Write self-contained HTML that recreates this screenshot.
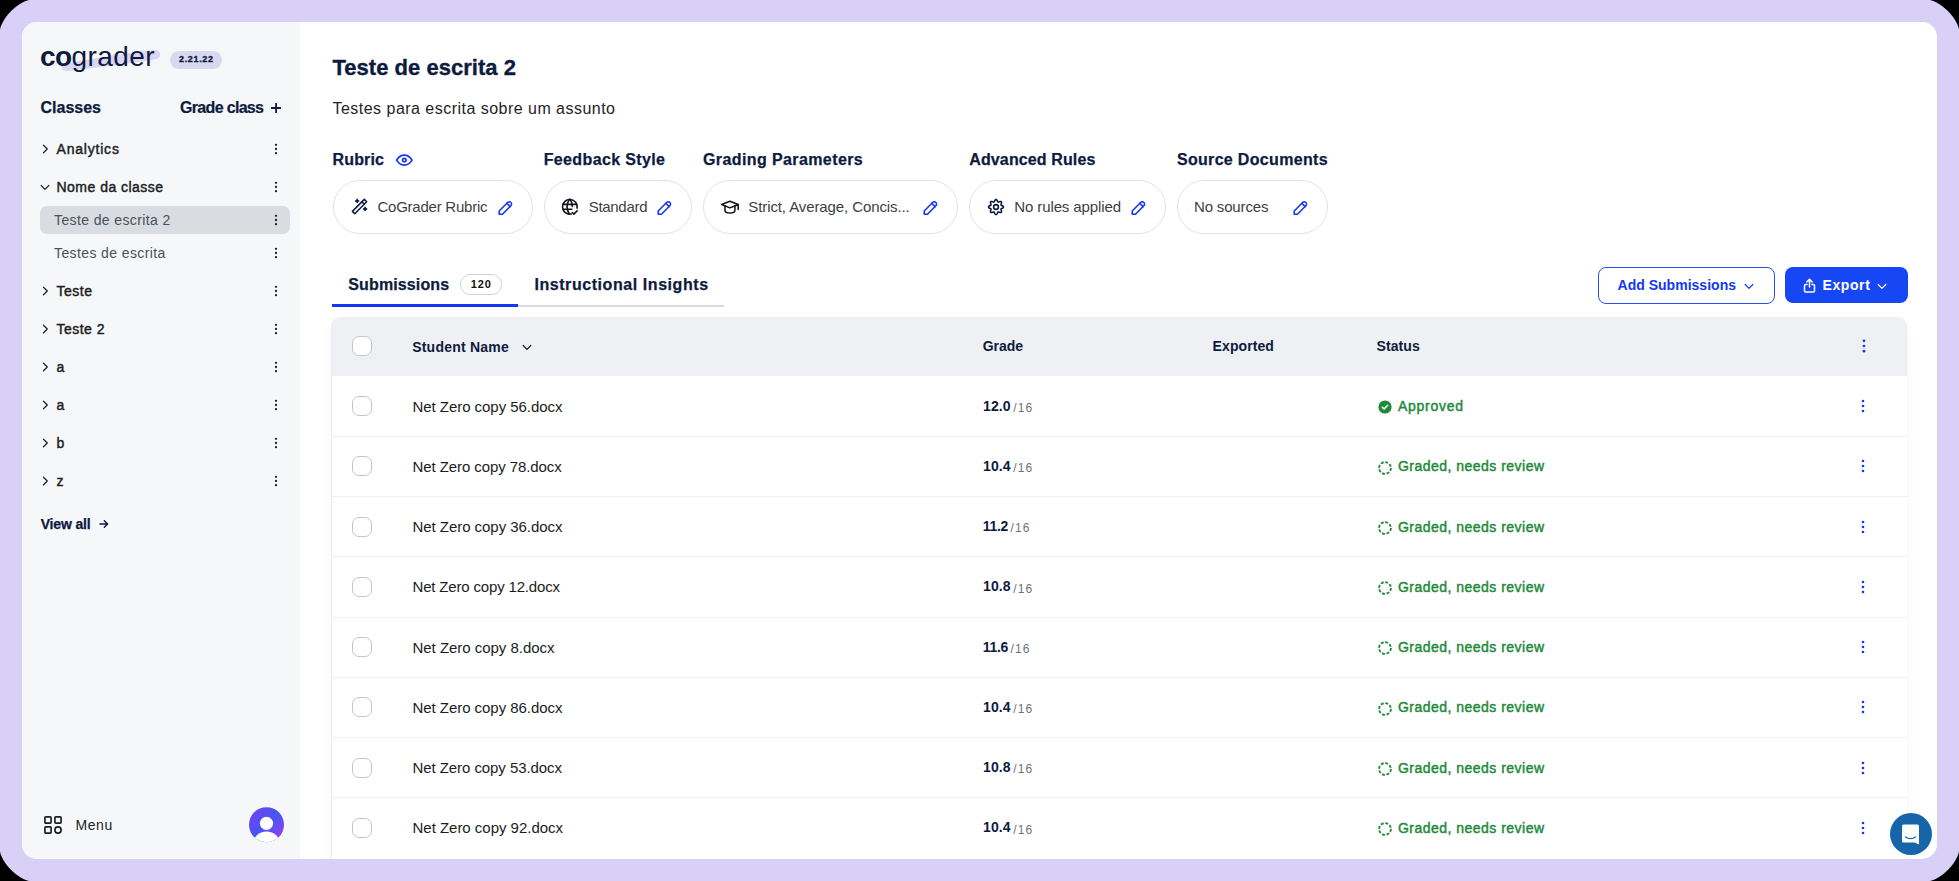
<!DOCTYPE html>
<html><head><meta charset="utf-8">
<style>
*{box-sizing:border-box;margin:0;padding:0}
html,body{width:1959px;height:881px;overflow:hidden;background:#000}
body{font-family:"Liberation Sans",sans-serif;position:relative}
.frame{position:absolute;left:0;top:0;width:1959px;height:881px;background:#d8d0f6;border-radius:30px}
.panel{position:absolute;left:22px;top:22px;width:1915px;height:837px;background:#fff;border-radius:15px;overflow:hidden}
.side{position:absolute;left:0;top:0;width:278px;height:837px;background:#f6f7f9}
.inner{position:absolute;left:-22px;top:-22px;width:1959px;height:881px}
.abs{position:absolute}
.t{position:absolute;white-space:nowrap}
.pill{border:1px solid #dfe2e8;border-radius:27px;background:#fff}
.tbl{background:#fff;border-radius:9px;box-shadow:-1px 0 0 #eceef1,0 5px 10px rgba(20,30,60,0.05)}
</style></head><body>
<svg style="position:absolute;left:0;top:0" width="1959" height="881" viewBox="0 0 1959 881"><path d="M0.00 30.00 L0.09 29.21 L0.34 28.01 L0.77 26.61 L1.36 25.05 L2.10 23.39 L3.01 21.66 L4.05 19.89 L5.24 18.09 L6.54 16.30 L7.97 14.52 L9.49 12.78 L11.10 11.10 L12.78 9.49 L14.52 7.97 L16.30 6.54 L18.09 5.24 L19.89 4.05 L21.66 3.01 L23.39 2.10 L25.05 1.36 L26.61 0.77 L28.01 0.34 L29.21 0.09 L30.00 0.00 L1929.00 0.00 L1929.79 0.09 L1930.99 0.34 L1932.39 0.77 L1933.95 1.36 L1935.61 2.10 L1937.34 3.01 L1939.11 4.05 L1940.91 5.24 L1942.70 6.54 L1944.48 7.97 L1946.22 9.49 L1947.90 11.10 L1949.51 12.78 L1951.03 14.52 L1952.46 16.30 L1953.76 18.09 L1954.95 19.89 L1955.99 21.66 L1956.90 23.39 L1957.64 25.05 L1958.23 26.61 L1958.66 28.01 L1958.91 29.21 L1959.00 30.00 L1959.00 851.00 L1958.91 851.79 L1958.66 852.99 L1958.23 854.39 L1957.64 855.95 L1956.90 857.61 L1955.99 859.34 L1954.95 861.11 L1953.76 862.91 L1952.46 864.70 L1951.03 866.48 L1949.51 868.22 L1947.90 869.90 L1946.22 871.51 L1944.48 873.03 L1942.70 874.46 L1940.91 875.76 L1939.11 876.95 L1937.34 877.99 L1935.61 878.90 L1933.95 879.64 L1932.39 880.23 L1930.99 880.66 L1929.79 880.91 L1929.00 881.00 L30.00 881.00 L29.21 880.91 L28.01 880.66 L26.61 880.23 L25.05 879.64 L23.39 878.90 L21.66 877.99 L19.89 876.95 L18.09 875.76 L16.30 874.46 L14.52 873.03 L12.78 871.51 L11.10 869.90 L9.49 868.22 L7.97 866.48 L6.54 864.70 L5.24 862.91 L4.05 861.11 L3.01 859.34 L2.10 857.61 L1.36 855.95 L0.77 854.39 L0.34 852.99 L0.09 851.79 L0.00 851.00Z" fill="#d8d0f6"/></svg>
<div class="panel">
  <div class="side"></div>
  <div class="inner">
<svg class="abs" style="left:58px;top:44px" width="106" height="32" viewBox="0 0 106 32"><path d="M6 20 C 30 15, 70 9, 97 6 C 103 5.5, 104 13, 99 15 C 75 19, 35 24, 9 27 C 3 27.5, 1 21, 6 20 Z" fill="#d9d6f4"/></svg><div class="t" style="left:40.00px;top:43.00px;font-size:28px;line-height:28px;color:#0d1b3e;"><b style="font-weight:bold;letter-spacing:-0.6px">co</b><span style="letter-spacing:0.45px">grader</span></div><div class="abs" style="left:170px;top:50.5px;width:52px;height:18px;border-radius:9px;background:#dad7f1"></div><div class="t" style="left:179.00px;top:54.98px;font-size:9px;line-height:9px;color:#0d1b3e;font-weight:bold;letter-spacing:0.662px;-webkit-text-stroke:0.3px #0d1b3e;">2.21.22</div><div class="t" style="left:40.50px;top:99.76px;font-size:16px;line-height:16px;color:#0d1b3e;font-weight:bold;-webkit-text-stroke:0.25px #0d1b3e;">Classes</div><div class="t" style="left:180.00px;top:99.76px;font-size:16px;line-height:16px;color:#0d1b3e;font-weight:bold;letter-spacing:-0.673px;-webkit-text-stroke:0.2px #0d1b3e;">Grade class</div><svg class="abs" style="left:270.8px;top:103px" width="10.2" height="10" viewBox="0 0 10.2 10"><path d="M5.1 0V10M0 5H10.2" stroke="#0d1b3e" stroke-width="1.8"/></svg><div class="abs" style="left:40px;top:206.3px;width:250px;height:27.3px;border-radius:7px;background:#d9dde2"></div><div class="t" style="left:56.50px;top:141.55px;font-size:14px;line-height:14px;color:#1c1f24;letter-spacing:0.797px;-webkit-text-stroke:0.45px #1c1f24;">Analytics</div><svg class="abs" style="left:41px;top:143.6px" width="8" height="10" viewBox="0 0 8 10"><path d="M2.5 1.2L6.3 5L2.5 8.8" fill="none" stroke="#1f2328" stroke-width="1.25" stroke-linecap="round" stroke-linejoin="round"/></svg><svg class="abs" style="left:273px;top:141.6px" width="6" height="14" viewBox="0 0 6 14"><circle cx="3" cy="2.8" r="1.15" fill="#1f2328"/><circle cx="3" cy="7" r="1.15" fill="#1f2328"/><circle cx="3" cy="11.2" r="1.15" fill="#1f2328"/></svg><div class="t" style="left:56.50px;top:179.65px;font-size:14px;line-height:14px;color:#1c1f24;letter-spacing:0.479px;-webkit-text-stroke:0.45px #1c1f24;">Nome da classe</div><svg class="abs" style="left:40px;top:182.7px" width="10" height="8" viewBox="0 0 10 8"><path d="M1.2 2.5L5 6.3L8.8 2.5" fill="none" stroke="#1f2328" stroke-width="1.2" stroke-linecap="round" stroke-linejoin="round"/></svg><svg class="abs" style="left:273px;top:179.7px" width="6" height="14" viewBox="0 0 6 14"><circle cx="3" cy="2.8" r="1.15" fill="#1f2328"/><circle cx="3" cy="7" r="1.15" fill="#1f2328"/><circle cx="3" cy="11.2" r="1.15" fill="#1f2328"/></svg><div class="t" style="left:56.50px;top:321.85px;font-size:14px;line-height:14px;color:#1c1f24;letter-spacing:0.477px;-webkit-text-stroke:0.45px #1c1f24;">Teste 2</div><svg class="abs" style="left:41px;top:323.9px" width="8" height="10" viewBox="0 0 8 10"><path d="M2.5 1.2L6.3 5L2.5 8.8" fill="none" stroke="#1f2328" stroke-width="1.25" stroke-linecap="round" stroke-linejoin="round"/></svg><svg class="abs" style="left:273px;top:321.9px" width="6" height="14" viewBox="0 0 6 14"><circle cx="3" cy="2.8" r="1.15" fill="#1f2328"/><circle cx="3" cy="7" r="1.15" fill="#1f2328"/><circle cx="3" cy="11.2" r="1.15" fill="#1f2328"/></svg><div class="t" style="left:56.50px;top:359.65px;font-size:14px;line-height:14px;color:#1c1f24;-webkit-text-stroke:0.45px #1c1f24;">a</div><svg class="abs" style="left:41px;top:361.7px" width="8" height="10" viewBox="0 0 8 10"><path d="M2.5 1.2L6.3 5L2.5 8.8" fill="none" stroke="#1f2328" stroke-width="1.25" stroke-linecap="round" stroke-linejoin="round"/></svg><svg class="abs" style="left:273px;top:359.7px" width="6" height="14" viewBox="0 0 6 14"><circle cx="3" cy="2.8" r="1.15" fill="#1f2328"/><circle cx="3" cy="7" r="1.15" fill="#1f2328"/><circle cx="3" cy="11.2" r="1.15" fill="#1f2328"/></svg><div class="t" style="left:56.50px;top:397.65px;font-size:14px;line-height:14px;color:#1c1f24;-webkit-text-stroke:0.45px #1c1f24;">a</div><svg class="abs" style="left:41px;top:399.7px" width="8" height="10" viewBox="0 0 8 10"><path d="M2.5 1.2L6.3 5L2.5 8.8" fill="none" stroke="#1f2328" stroke-width="1.25" stroke-linecap="round" stroke-linejoin="round"/></svg><svg class="abs" style="left:273px;top:397.7px" width="6" height="14" viewBox="0 0 6 14"><circle cx="3" cy="2.8" r="1.15" fill="#1f2328"/><circle cx="3" cy="7" r="1.15" fill="#1f2328"/><circle cx="3" cy="11.2" r="1.15" fill="#1f2328"/></svg><div class="t" style="left:56.50px;top:435.65px;font-size:14px;line-height:14px;color:#1c1f24;-webkit-text-stroke:0.45px #1c1f24;">b</div><svg class="abs" style="left:41px;top:437.7px" width="8" height="10" viewBox="0 0 8 10"><path d="M2.5 1.2L6.3 5L2.5 8.8" fill="none" stroke="#1f2328" stroke-width="1.25" stroke-linecap="round" stroke-linejoin="round"/></svg><svg class="abs" style="left:273px;top:435.7px" width="6" height="14" viewBox="0 0 6 14"><circle cx="3" cy="2.8" r="1.15" fill="#1f2328"/><circle cx="3" cy="7" r="1.15" fill="#1f2328"/><circle cx="3" cy="11.2" r="1.15" fill="#1f2328"/></svg><div class="t" style="left:56.50px;top:473.65px;font-size:14px;line-height:14px;color:#1c1f24;-webkit-text-stroke:0.45px #1c1f24;">z</div><svg class="abs" style="left:41px;top:475.7px" width="8" height="10" viewBox="0 0 8 10"><path d="M2.5 1.2L6.3 5L2.5 8.8" fill="none" stroke="#1f2328" stroke-width="1.25" stroke-linecap="round" stroke-linejoin="round"/></svg><svg class="abs" style="left:273px;top:473.7px" width="6" height="14" viewBox="0 0 6 14"><circle cx="3" cy="2.8" r="1.15" fill="#1f2328"/><circle cx="3" cy="7" r="1.15" fill="#1f2328"/><circle cx="3" cy="11.2" r="1.15" fill="#1f2328"/></svg><div class="t" style="left:56.50px;top:283.65px;font-size:14px;line-height:14px;color:#1c1f24;letter-spacing:0.510px;-webkit-text-stroke:0.45px #1c1f24;">Teste</div><svg class="abs" style="left:41px;top:285.7px" width="8" height="10" viewBox="0 0 8 10"><path d="M2.5 1.2L6.3 5L2.5 8.8" fill="none" stroke="#1f2328" stroke-width="1.25" stroke-linecap="round" stroke-linejoin="round"/></svg><svg class="abs" style="left:273px;top:283.7px" width="6" height="14" viewBox="0 0 6 14"><circle cx="3" cy="2.8" r="1.15" fill="#1f2328"/><circle cx="3" cy="7" r="1.15" fill="#1f2328"/><circle cx="3" cy="11.2" r="1.15" fill="#1f2328"/></svg><div class="t" style="left:54.00px;top:212.65px;font-size:14px;line-height:14px;color:#4b5058;letter-spacing:0.381px;">Teste de escrita 2</div><svg class="abs" style="left:273px;top:212.5px" width="6" height="14" viewBox="0 0 6 14"><circle cx="3" cy="2.8" r="1.15" fill="#1f2328"/><circle cx="3" cy="7" r="1.15" fill="#1f2328"/><circle cx="3" cy="11.2" r="1.15" fill="#1f2328"/></svg><div class="t" style="left:54.00px;top:245.65px;font-size:14px;line-height:14px;color:#4b5058;letter-spacing:0.391px;">Testes de escrita</div><svg class="abs" style="left:273px;top:245.5px" width="6" height="14" viewBox="0 0 6 14"><circle cx="3" cy="2.8" r="1.15" fill="#1f2328"/><circle cx="3" cy="7" r="1.15" fill="#1f2328"/><circle cx="3" cy="11.2" r="1.15" fill="#1f2328"/></svg><div class="t" style="left:40.70px;top:516.85px;font-size:14px;line-height:14px;color:#0d1b3e;font-weight:bold;letter-spacing:-0.158px;-webkit-text-stroke:0.25px #0d1b3e;">View all</div><svg class="abs" style="left:98.5px;top:519px" width="10" height="10" viewBox="0 0 10 10"><path d="M1 5H8.6M5.3 1.8L8.6 5L5.3 8.2" fill="none" stroke="#0d1b3e" stroke-width="1.5" stroke-linecap="round" stroke-linejoin="round"/></svg><svg class="abs" style="left:44px;top:816px" width="18" height="18" viewBox="0 0 18 18" fill="none" stroke="#1c1f24" stroke-width="1.7"><rect x="0.9" y="0.9" width="6.2" height="6.2" rx="1"/><rect x="10.9" y="0.9" width="6.2" height="6.2" rx="1"/><rect x="0.9" y="10.9" width="6.2" height="6.2" rx="1"/><circle cx="14" cy="14" r="3.1"/></svg><div class="t" style="left:75.50px;top:818.35px;font-size:14px;line-height:14px;color:#1c1f24;letter-spacing:0.560px;">Menu</div><svg class="abs" style="left:249px;top:807px" width="35" height="36" viewBox="0 0 35 36"><defs><linearGradient id="av" x1="0" y1="0" x2="1" y2="1"><stop offset="0" stop-color="#7a3cf0"/><stop offset="0.5" stop-color="#4656f4"/><stop offset="1" stop-color="#a83cef"/></linearGradient><clipPath id="avc"><circle cx="17.5" cy="17.7" r="17.5"/></clipPath></defs><circle cx="17.5" cy="17.7" r="17.5" fill="url(#av)"/><g clip-path="url(#avc)"><circle cx="17.5" cy="16.3" r="6.6" fill="#fff"/><ellipse cx="17.5" cy="37" rx="13.5" ry="12.5" fill="#fff"/></g></svg>
<div class="t" style="left:332.50px;top:57.18px;font-size:22px;line-height:22px;color:#0d1b3e;font-weight:bold;letter-spacing:0.028px;-webkit-text-stroke:0.35px #0d1b3e;">Teste de escrita 2</div><div class="t" style="left:332.50px;top:100.66px;font-size:16px;line-height:16px;color:#1f2328;letter-spacing:0.474px;">Testes para escrita sobre um assunto</div><div class="t" style="left:332.50px;top:152.16px;font-size:16px;line-height:16px;color:#0d1b3e;font-weight:bold;letter-spacing:0.166px;-webkit-text-stroke:0.25px #0d1b3e;">Rubric</div><div class="t" style="left:543.70px;top:152.16px;font-size:16px;line-height:16px;color:#0d1b3e;font-weight:bold;letter-spacing:0.369px;-webkit-text-stroke:0.25px #0d1b3e;">Feedback Style</div><div class="t" style="left:703.00px;top:152.16px;font-size:16px;line-height:16px;color:#0d1b3e;font-weight:bold;letter-spacing:0.397px;-webkit-text-stroke:0.25px #0d1b3e;">Grading Parameters</div><div class="t" style="left:969.30px;top:152.16px;font-size:16px;line-height:16px;color:#0d1b3e;font-weight:bold;letter-spacing:0.117px;-webkit-text-stroke:0.25px #0d1b3e;">Advanced Rules</div><div class="t" style="left:1176.90px;top:152.16px;font-size:16px;line-height:16px;color:#0d1b3e;font-weight:bold;letter-spacing:0.326px;-webkit-text-stroke:0.25px #0d1b3e;">Source Documents</div><svg class="abs" style="left:394.18px;top:149.79px" width="20.64" height="20.23" viewBox="0 0 24 24" preserveAspectRatio="none" fill="none" stroke="#1536f5" stroke-width="2.00" stroke-linecap="round" stroke-linejoin="round" ><path d="M10 12a2 2 0 1 0 4 0a2 2 0 0 0 -4 0"/><path d="M21 12c-2.4 4 -5.4 6 -9 6c-3.6 0 -6.6 -2 -9 -6c2.4 -4 5.4 -6 9 -6c3.6 0 6.6 2 9 6"/></svg><div class="abs pill" style="left:332.5px;top:180.4px;width:200.5px;height:54px"></div><div class="abs pill" style="left:543.7px;top:180.4px;width:148.79999999999995px;height:54px"></div><div class="abs pill" style="left:703px;top:180.4px;width:255px;height:54px"></div><div class="abs pill" style="left:968.7px;top:180.4px;width:197.29999999999995px;height:54px"></div><div class="abs pill" style="left:1176.9px;top:180.4px;width:151.0999999999999px;height:54px"></div><div class="t" style="left:377.50px;top:198.80px;font-size:15px;line-height:15px;color:#3a3f47;letter-spacing:-0.241px;">CoGrader Rubric</div><div class="t" style="left:588.70px;top:198.80px;font-size:15px;line-height:15px;color:#3a3f47;letter-spacing:-0.297px;">Standard</div><div class="t" style="left:748.30px;top:198.80px;font-size:15px;line-height:15px;color:#3a3f47;letter-spacing:-0.102px;">Strict, Average, Concis...</div><div class="t" style="left:1014.30px;top:198.80px;font-size:15px;line-height:15px;color:#3a3f47;letter-spacing:-0.113px;">No rules applied</div><div class="t" style="left:1194.00px;top:198.80px;font-size:15px;line-height:15px;color:#3a3f47;letter-spacing:-0.163px;">No sources</div><svg class="abs" style="left:495.79px;top:197.78px" width="19.30" height="19.57" viewBox="0 0 24 24" preserveAspectRatio="none" fill="none" stroke="#1536f5" stroke-width="1.98" stroke-linecap="round" stroke-linejoin="round" ><path d="M4 20h4l10.5 -10.5a2.828 2.828 0 1 0 -4 -4l-10.5 10.5v4"/><path d="M13.5 6.5l4 4"/></svg><svg class="abs" style="left:655.39px;top:197.78px" width="19.30" height="19.57" viewBox="0 0 24 24" preserveAspectRatio="none" fill="none" stroke="#1536f5" stroke-width="1.98" stroke-linecap="round" stroke-linejoin="round" ><path d="M4 20h4l10.5 -10.5a2.828 2.828 0 1 0 -4 -4l-10.5 10.5v4"/><path d="M13.5 6.5l4 4"/></svg><svg class="abs" style="left:921.19px;top:197.78px" width="19.30" height="19.57" viewBox="0 0 24 24" preserveAspectRatio="none" fill="none" stroke="#1536f5" stroke-width="1.98" stroke-linecap="round" stroke-linejoin="round" ><path d="M4 20h4l10.5 -10.5a2.828 2.828 0 1 0 -4 -4l-10.5 10.5v4"/><path d="M13.5 6.5l4 4"/></svg><svg class="abs" style="left:1129.19px;top:197.78px" width="19.30" height="19.57" viewBox="0 0 24 24" preserveAspectRatio="none" fill="none" stroke="#1536f5" stroke-width="1.98" stroke-linecap="round" stroke-linejoin="round" ><path d="M4 20h4l10.5 -10.5a2.828 2.828 0 1 0 -4 -4l-10.5 10.5v4"/><path d="M13.5 6.5l4 4"/></svg><svg class="abs" style="left:1291.19px;top:197.78px" width="19.30" height="19.57" viewBox="0 0 24 24" preserveAspectRatio="none" fill="none" stroke="#1536f5" stroke-width="1.98" stroke-linecap="round" stroke-linejoin="round" ><path d="M4 20h4l10.5 -10.5a2.828 2.828 0 1 0 -4 -4l-10.5 10.5v4"/><path d="M13.5 6.5l4 4"/></svg><svg class="abs" style="left:349.57px;top:197.26px" width="19.06" height="19.18" viewBox="0 0 24 24" preserveAspectRatio="none" fill="none" stroke="#0d1b3e" stroke-width="1.95" stroke-linecap="round" stroke-linejoin="round" ><path d="M6 21l15 -15l-3 -3l-15 15l3 3"/><path d="M15 6l3 3"/><path d="M9 3a2 2 0 0 0 2 2a2 2 0 0 0 -2 2a2 2 0 0 0 -2 -2a2 2 0 0 0 2 -2"/><path d="M19 13a2 2 0 0 0 2 2a2 2 0 0 0 -2 2a2 2 0 0 0 -2 -2a2 2 0 0 0 2 -2"/></svg><svg class="abs" style="left:560.37px;top:197.07px" width="19.56" height="19.56" viewBox="0 0 24 24" preserveAspectRatio="none" fill="none" stroke="#111418" stroke-width="1.96" stroke-linecap="round" stroke-linejoin="round" ><path d="M20.946 13.743a9 9 0 1 0 -7.26 7.172"/><path d="M3.6 9h16.8"/><path d="M3.6 15h10.9"/><path d="M11.5 3a17 17 0 0 0 0 18"/><path d="M12.5 3a16.984 16.984 0 0 1 2.574 8.62"/><path d="M15 19l2 2l4 -4"/></svg><svg class="abs" style="left:719.77px;top:196.65px" width="19.85" height="20.10" viewBox="0 0 24 24" preserveAspectRatio="none" fill="none" stroke="#111418" stroke-width="1.86" stroke-linecap="round" stroke-linejoin="round" ><path d="M22 9l-10 -4l-10 4l10 4l10 -4v6"/><path d="M6 10.6v5.4a6 3 0 0 0 12 0v-5.4"/></svg><svg class="abs" style="left:985.5px;top:196.85px" width="20" height="20" viewBox="0 0 20 20" fill="none" stroke="#0d1b3e" stroke-width="1.6"><path d="M10.00 2.50 L10.29 2.56 L10.57 2.72 L10.83 2.98 L11.06 3.31 L11.26 3.67 L11.43 4.04 L11.58 4.39 L11.73 4.67 L11.89 4.89 L12.07 5.01 L12.28 5.05 L12.54 5.01 L12.85 4.91 L13.20 4.78 L13.58 4.64 L13.98 4.52 L14.38 4.45 L14.74 4.45 L15.06 4.53 L15.30 4.70 L15.47 4.94 L15.55 5.26 L15.55 5.62 L15.48 6.02 L15.36 6.42 L15.22 6.80 L15.09 7.15 L14.99 7.46 L14.95 7.72 L14.99 7.93 L15.11 8.11 L15.33 8.27 L15.61 8.42 L15.96 8.57 L16.33 8.74 L16.69 8.94 L17.02 9.17 L17.28 9.43 L17.44 9.71 L17.50 10.00 L17.44 10.29 L17.28 10.57 L17.02 10.83 L16.69 11.06 L16.33 11.26 L15.96 11.43 L15.61 11.58 L15.33 11.73 L15.11 11.89 L14.99 12.07 L14.95 12.28 L14.99 12.54 L15.09 12.85 L15.22 13.20 L15.36 13.58 L15.48 13.98 L15.55 14.38 L15.55 14.74 L15.47 15.06 L15.30 15.30 L15.06 15.47 L14.74 15.55 L14.38 15.55 L13.98 15.48 L13.58 15.36 L13.20 15.22 L12.85 15.09 L12.54 14.99 L12.28 14.95 L12.07 14.99 L11.89 15.11 L11.73 15.33 L11.58 15.61 L11.43 15.96 L11.26 16.33 L11.06 16.69 L10.83 17.02 L10.57 17.28 L10.29 17.44 L10.00 17.50 L9.71 17.44 L9.43 17.28 L9.17 17.02 L8.94 16.69 L8.74 16.33 L8.57 15.96 L8.42 15.61 L8.27 15.33 L8.11 15.11 L7.93 14.99 L7.72 14.95 L7.46 14.99 L7.15 15.09 L6.80 15.22 L6.42 15.36 L6.02 15.48 L5.62 15.55 L5.26 15.55 L4.94 15.47 L4.70 15.30 L4.53 15.06 L4.45 14.74 L4.45 14.38 L4.52 13.98 L4.64 13.58 L4.78 13.20 L4.91 12.85 L5.01 12.54 L5.05 12.28 L5.01 12.07 L4.89 11.89 L4.67 11.73 L4.39 11.58 L4.04 11.43 L3.67 11.26 L3.31 11.06 L2.98 10.83 L2.72 10.57 L2.56 10.29 L2.50 10.00 L2.56 9.71 L2.72 9.43 L2.98 9.17 L3.31 8.94 L3.67 8.74 L4.04 8.57 L4.39 8.42 L4.67 8.27 L4.89 8.11 L5.01 7.93 L5.05 7.72 L5.01 7.46 L4.91 7.15 L4.78 6.80 L4.64 6.42 L4.52 6.02 L4.45 5.62 L4.45 5.26 L4.53 4.94 L4.70 4.70 L4.94 4.53 L5.26 4.45 L5.62 4.45 L6.02 4.52 L6.42 4.64 L6.80 4.78 L7.15 4.91 L7.46 5.01 L7.72 5.05 L7.93 5.01 L8.11 4.89 L8.27 4.67 L8.42 4.39 L8.57 4.04 L8.74 3.67 L8.94 3.31 L9.17 2.98 L9.43 2.72 L9.71 2.56Z"/><circle cx="10" cy="10" r="2.4"/></svg><div class="t" style="left:348.30px;top:277.26px;font-size:16px;line-height:16px;color:#0d1b3e;font-weight:bold;letter-spacing:0.122px;-webkit-text-stroke:0.25px #0d1b3e;">Submissions</div><div class="abs" style="left:459.8px;top:274.2px;width:42px;height:20.4px;border:1.3px solid #cdd2d8;border-radius:10.2px;background:#fff"></div><div class="t" style="left:470.70px;top:279.19px;font-size:11px;line-height:11px;color:#111;font-weight:bold;letter-spacing:0.923px;">120</div><div class="t" style="left:534.40px;top:277.26px;font-size:16px;line-height:16px;color:#0d1b3e;font-weight:bold;letter-spacing:0.567px;-webkit-text-stroke:0.25px #0d1b3e;">Instructional Insights</div><div class="abs" style="left:332px;top:304.7px;width:392px;height:2px;background:#d7dae0"></div><div class="abs" style="left:332px;top:304px;width:186px;height:3px;background:#1536f5"></div><div class="abs" style="left:1598px;top:267.3px;width:176.5px;height:36.3px;border:1.5px solid #2a4bf6;border-radius:8px;background:#fff"></div><div class="t" style="left:1617.50px;top:277.95px;font-size:14px;line-height:14px;color:#1238f3;font-weight:bold;letter-spacing:0.019px;">Add Submissions</div><svg class="abs" style="left:1744px;top:282px" width="10" height="8" viewBox="0 0 10 8"><path d="M1.2 2.5L5 6.3L8.8 2.5" fill="none" stroke="#1238f3" stroke-width="1.2" stroke-linecap="round" stroke-linejoin="round"/></svg><div class="abs" style="left:1784.5px;top:267.2px;width:123.5px;height:35.9px;border-radius:8px;background:#1747f5"></div><svg class="abs" style="left:1803px;top:278px" width="13" height="15" viewBox="0 0 13 15" fill="none" stroke="#fff" stroke-width="1.5" stroke-linecap="round" stroke-linejoin="round"><path d="M6.5 9V1.5M3.8 4L6.5 1.3 9.2 4"/><path d="M4 6.5H2.5a1 1 0 0 0-1 1V13a1 1 0 0 0 1 1h8a1 1 0 0 0 1-1V7.5a1 1 0 0 0-1-1H9"/></svg><div class="t" style="left:1822.60px;top:277.75px;font-size:14px;line-height:14px;color:#fff;font-weight:bold;letter-spacing:0.572px;">Export</div><svg class="abs" style="left:1877px;top:282px" width="10" height="8" viewBox="0 0 10 8"><path d="M1.2 2.5L5 6.3L8.8 2.5" fill="none" stroke="#fff" stroke-width="1.2" stroke-linecap="round" stroke-linejoin="round"/></svg><div class="abs tbl" style="left:332px;top:316.6px;width:1575.3px;height:560px"></div><div class="abs" style="left:332px;top:316.6px;width:1575.3px;height:59.4px;background:#eff0f3;border-radius:9px 9px 0 0"></div><div class="abs" style="left:352px;top:336.2px;width:20px;height:20px;border:1px solid #bfc6d2;border-radius:7px;background:#fff"></div><div class="t" style="left:412.20px;top:339.55px;font-size:14px;line-height:14px;color:#0d1b3e;font-weight:bold;letter-spacing:0.216px;">Student Name</div><svg class="abs" style="left:522px;top:342.5px" width="10" height="8" viewBox="0 0 10 8"><path d="M1.2 2.5L5 6.3L8.8 2.5" fill="none" stroke="#0d1b3e" stroke-width="1.2" stroke-linecap="round" stroke-linejoin="round"/></svg><div class="t" style="left:982.70px;top:339.15px;font-size:14px;line-height:14px;color:#0d1b3e;font-weight:bold;">Grade</div><div class="t" style="left:1212.60px;top:339.15px;font-size:14px;line-height:14px;color:#0d1b3e;font-weight:bold;letter-spacing:0.089px;">Exported</div><div class="t" style="left:1376.50px;top:339.15px;font-size:14px;line-height:14px;color:#0d1b3e;font-weight:bold;letter-spacing:0.103px;">Status</div><svg class="abs" style="left:1861px;top:338.6px" width="6" height="14" viewBox="0 0 6 14"><circle cx="3" cy="1.7999999999999998" r="1.35" fill="#1536f5"/><circle cx="3" cy="7" r="1.35" fill="#1536f5"/><circle cx="3" cy="12.2" r="1.35" fill="#1536f5"/></svg><div class="abs" style="left:352px;top:396.0px;width:20px;height:20px;border:1px solid #bfc6d2;border-radius:7px;background:#fff"></div><div class="t" style="left:412.50px;top:398.60px;font-size:15px;line-height:15px;color:#1a1d21;letter-spacing:-0.045px;">Net Zero copy 56.docx</div><div class="t" style="left:983.00px;top:398.65px;font-size:14px;line-height:14px;color:#0d1b3e;font-weight:bold;letter-spacing:0.117px;">12.0</div><div class="t" style="left:1013.30px;top:401.84px;font-size:12px;line-height:12px;color:#6b7280;letter-spacing:1.059px;">/16</div><svg class="abs" style="left:1377.5px;top:399.70px" width="14" height="14" viewBox="0 0 14 14"><circle cx="7" cy="7" r="6.6" fill="#1e8a3a"/><path d="M4.3 7.2l1.8 1.7 3.6-3.6" fill="none" stroke="#fff" stroke-width="1.5" stroke-linecap="round" stroke-linejoin="round"/></svg><div class="t" style="left:1398.00px;top:399.15px;font-size:14px;line-height:14px;color:#1e8a3a;letter-spacing:0.724px;-webkit-text-stroke:0.45px #1e8a3a;">Approved</div><svg class="abs" style="left:1860px;top:399.0px" width="6" height="14" viewBox="0 0 6 14"><circle cx="3" cy="2.0" r="1.3" fill="#1536f5"/><circle cx="3" cy="7" r="1.3" fill="#1536f5"/><circle cx="3" cy="12.0" r="1.3" fill="#1536f5"/></svg><div class="abs" style="left:332px;top:435.75px;width:1575.3px;height:1px;background:#eef0f3"></div><div class="abs" style="left:352px;top:456.25px;width:20px;height:20px;border:1px solid #bfc6d2;border-radius:7px;background:#fff"></div><div class="t" style="left:412.50px;top:458.85px;font-size:15px;line-height:15px;color:#1a1d21;letter-spacing:-0.085px;">Net Zero copy 78.docx</div><div class="t" style="left:983.00px;top:458.90px;font-size:14px;line-height:14px;color:#0d1b3e;font-weight:bold;letter-spacing:0.117px;">10.4</div><div class="t" style="left:1013.30px;top:462.09px;font-size:12px;line-height:12px;color:#6b7280;letter-spacing:1.059px;">/16</div><svg class="abs" style="left:1377.5px;top:460.65px" width="14" height="14" viewBox="0 0 14 14"><circle cx="7" cy="7" r="5.9" fill="none" stroke="#1e8a3a" stroke-width="1.85" stroke-dasharray="2.95 1.6"/></svg><div class="t" style="left:1398.00px;top:459.40px;font-size:14px;line-height:14px;color:#1e8a3a;letter-spacing:0.476px;-webkit-text-stroke:0.45px #1e8a3a;">Graded, needs review</div><svg class="abs" style="left:1860px;top:459.25px" width="6" height="14" viewBox="0 0 6 14"><circle cx="3" cy="2.0" r="1.3" fill="#1536f5"/><circle cx="3" cy="7" r="1.3" fill="#1536f5"/><circle cx="3" cy="12.0" r="1.3" fill="#1536f5"/></svg><div class="abs" style="left:332px;top:496.00px;width:1575.3px;height:1px;background:#eef0f3"></div><div class="abs" style="left:352px;top:516.5px;width:20px;height:20px;border:1px solid #bfc6d2;border-radius:7px;background:#fff"></div><div class="t" style="left:412.50px;top:519.10px;font-size:15px;line-height:15px;color:#1a1d21;letter-spacing:-0.045px;">Net Zero copy 36.docx</div><div class="t" style="left:982.80px;top:519.15px;font-size:14px;line-height:14px;color:#0d1b3e;font-weight:bold;letter-spacing:-0.292px;">11.2</div><div class="t" style="left:1010.50px;top:522.34px;font-size:12px;line-height:12px;color:#6b7280;letter-spacing:1.059px;">/16</div><svg class="abs" style="left:1377.5px;top:520.90px" width="14" height="14" viewBox="0 0 14 14"><circle cx="7" cy="7" r="5.9" fill="none" stroke="#1e8a3a" stroke-width="1.85" stroke-dasharray="2.95 1.6"/></svg><div class="t" style="left:1398.00px;top:519.65px;font-size:14px;line-height:14px;color:#1e8a3a;letter-spacing:0.476px;-webkit-text-stroke:0.45px #1e8a3a;">Graded, needs review</div><svg class="abs" style="left:1860px;top:519.5px" width="6" height="14" viewBox="0 0 6 14"><circle cx="3" cy="2.0" r="1.3" fill="#1536f5"/><circle cx="3" cy="7" r="1.3" fill="#1536f5"/><circle cx="3" cy="12.0" r="1.3" fill="#1536f5"/></svg><div class="abs" style="left:332px;top:556.25px;width:1575.3px;height:1px;background:#eef0f3"></div><div class="abs" style="left:352px;top:576.75px;width:20px;height:20px;border:1px solid #bfc6d2;border-radius:7px;background:#fff"></div><div class="t" style="left:412.50px;top:579.35px;font-size:15px;line-height:15px;color:#1a1d21;letter-spacing:-0.170px;">Net Zero copy 12.docx</div><div class="t" style="left:983.00px;top:579.40px;font-size:14px;line-height:14px;color:#0d1b3e;font-weight:bold;letter-spacing:0.117px;">10.8</div><div class="t" style="left:1013.30px;top:582.59px;font-size:12px;line-height:12px;color:#6b7280;letter-spacing:1.059px;">/16</div><svg class="abs" style="left:1377.5px;top:581.15px" width="14" height="14" viewBox="0 0 14 14"><circle cx="7" cy="7" r="5.9" fill="none" stroke="#1e8a3a" stroke-width="1.85" stroke-dasharray="2.95 1.6"/></svg><div class="t" style="left:1398.00px;top:579.90px;font-size:14px;line-height:14px;color:#1e8a3a;letter-spacing:0.476px;-webkit-text-stroke:0.45px #1e8a3a;">Graded, needs review</div><svg class="abs" style="left:1860px;top:579.75px" width="6" height="14" viewBox="0 0 6 14"><circle cx="3" cy="2.0" r="1.3" fill="#1536f5"/><circle cx="3" cy="7" r="1.3" fill="#1536f5"/><circle cx="3" cy="12.0" r="1.3" fill="#1536f5"/></svg><div class="abs" style="left:332px;top:616.50px;width:1575.3px;height:1px;background:#eef0f3"></div><div class="abs" style="left:352px;top:637.0px;width:20px;height:20px;border:1px solid #bfc6d2;border-radius:7px;background:#fff"></div><div class="t" style="left:412.50px;top:639.60px;font-size:15px;line-height:15px;color:#1a1d21;letter-spacing:-0.030px;">Net Zero copy 8.docx</div><div class="t" style="left:982.80px;top:639.65px;font-size:14px;line-height:14px;color:#0d1b3e;font-weight:bold;letter-spacing:-0.292px;">11.6</div><div class="t" style="left:1010.50px;top:642.84px;font-size:12px;line-height:12px;color:#6b7280;letter-spacing:1.059px;">/16</div><svg class="abs" style="left:1377.5px;top:641.40px" width="14" height="14" viewBox="0 0 14 14"><circle cx="7" cy="7" r="5.9" fill="none" stroke="#1e8a3a" stroke-width="1.85" stroke-dasharray="2.95 1.6"/></svg><div class="t" style="left:1398.00px;top:640.15px;font-size:14px;line-height:14px;color:#1e8a3a;letter-spacing:0.476px;-webkit-text-stroke:0.45px #1e8a3a;">Graded, needs review</div><svg class="abs" style="left:1860px;top:640.0px" width="6" height="14" viewBox="0 0 6 14"><circle cx="3" cy="2.0" r="1.3" fill="#1536f5"/><circle cx="3" cy="7" r="1.3" fill="#1536f5"/><circle cx="3" cy="12.0" r="1.3" fill="#1536f5"/></svg><div class="abs" style="left:332px;top:676.75px;width:1575.3px;height:1px;background:#eef0f3"></div><div class="abs" style="left:352px;top:697.25px;width:20px;height:20px;border:1px solid #bfc6d2;border-radius:7px;background:#fff"></div><div class="t" style="left:412.50px;top:699.85px;font-size:15px;line-height:15px;color:#1a1d21;letter-spacing:-0.045px;">Net Zero copy 86.docx</div><div class="t" style="left:983.00px;top:699.90px;font-size:14px;line-height:14px;color:#0d1b3e;font-weight:bold;letter-spacing:0.117px;">10.4</div><div class="t" style="left:1013.30px;top:703.09px;font-size:12px;line-height:12px;color:#6b7280;letter-spacing:1.059px;">/16</div><svg class="abs" style="left:1377.5px;top:701.65px" width="14" height="14" viewBox="0 0 14 14"><circle cx="7" cy="7" r="5.9" fill="none" stroke="#1e8a3a" stroke-width="1.85" stroke-dasharray="2.95 1.6"/></svg><div class="t" style="left:1398.00px;top:700.40px;font-size:14px;line-height:14px;color:#1e8a3a;letter-spacing:0.476px;-webkit-text-stroke:0.45px #1e8a3a;">Graded, needs review</div><svg class="abs" style="left:1860px;top:700.25px" width="6" height="14" viewBox="0 0 6 14"><circle cx="3" cy="2.0" r="1.3" fill="#1536f5"/><circle cx="3" cy="7" r="1.3" fill="#1536f5"/><circle cx="3" cy="12.0" r="1.3" fill="#1536f5"/></svg><div class="abs" style="left:332px;top:737.00px;width:1575.3px;height:1px;background:#eef0f3"></div><div class="abs" style="left:352px;top:757.5px;width:20px;height:20px;border:1px solid #bfc6d2;border-radius:7px;background:#fff"></div><div class="t" style="left:412.50px;top:760.10px;font-size:15px;line-height:15px;color:#1a1d21;letter-spacing:-0.070px;">Net Zero copy 53.docx</div><div class="t" style="left:983.00px;top:760.15px;font-size:14px;line-height:14px;color:#0d1b3e;font-weight:bold;letter-spacing:0.117px;">10.8</div><div class="t" style="left:1013.30px;top:763.34px;font-size:12px;line-height:12px;color:#6b7280;letter-spacing:1.059px;">/16</div><svg class="abs" style="left:1377.5px;top:761.90px" width="14" height="14" viewBox="0 0 14 14"><circle cx="7" cy="7" r="5.9" fill="none" stroke="#1e8a3a" stroke-width="1.85" stroke-dasharray="2.95 1.6"/></svg><div class="t" style="left:1398.00px;top:760.65px;font-size:14px;line-height:14px;color:#1e8a3a;letter-spacing:0.476px;-webkit-text-stroke:0.45px #1e8a3a;">Graded, needs review</div><svg class="abs" style="left:1860px;top:760.5px" width="6" height="14" viewBox="0 0 6 14"><circle cx="3" cy="2.0" r="1.3" fill="#1536f5"/><circle cx="3" cy="7" r="1.3" fill="#1536f5"/><circle cx="3" cy="12.0" r="1.3" fill="#1536f5"/></svg><div class="abs" style="left:332px;top:797.25px;width:1575.3px;height:1px;background:#eef0f3"></div><div class="abs" style="left:352px;top:817.75px;width:20px;height:20px;border:1px solid #bfc6d2;border-radius:7px;background:#fff"></div><div class="t" style="left:412.50px;top:820.35px;font-size:15px;line-height:15px;color:#1a1d21;letter-spacing:-0.020px;">Net Zero copy 92.docx</div><div class="t" style="left:983.00px;top:820.40px;font-size:14px;line-height:14px;color:#0d1b3e;font-weight:bold;letter-spacing:0.117px;">10.4</div><div class="t" style="left:1013.30px;top:823.59px;font-size:12px;line-height:12px;color:#6b7280;letter-spacing:1.059px;">/16</div><svg class="abs" style="left:1377.5px;top:822.15px" width="14" height="14" viewBox="0 0 14 14"><circle cx="7" cy="7" r="5.9" fill="none" stroke="#1e8a3a" stroke-width="1.85" stroke-dasharray="2.95 1.6"/></svg><div class="t" style="left:1398.00px;top:820.90px;font-size:14px;line-height:14px;color:#1e8a3a;letter-spacing:0.476px;-webkit-text-stroke:0.45px #1e8a3a;">Graded, needs review</div><svg class="abs" style="left:1860px;top:820.75px" width="6" height="14" viewBox="0 0 6 14"><circle cx="3" cy="2.0" r="1.3" fill="#1536f5"/><circle cx="3" cy="7" r="1.3" fill="#1536f5"/><circle cx="3" cy="12.0" r="1.3" fill="#1536f5"/></svg><svg class="abs" style="left:1890px;top:813px" width="42" height="42" viewBox="0 0 42 42"><circle cx="21" cy="21" r="21" fill="#1565a8"/><path d="M13.5 11.5h14a1.5 1.5 0 0 1 1.5 1.5v18.5l-4.5-2H13.5a1.5 1.5 0 0 1-1.5-1.5V13a1.5 1.5 0 0 1 1.5-1.5Z" fill="#fff"/><path d="M15.5 24c3 2 7 2 10 0" fill="none" stroke="#1565a8" stroke-width="1.3" stroke-linecap="round"/></svg>
  </div>
</div>
</body></html>
